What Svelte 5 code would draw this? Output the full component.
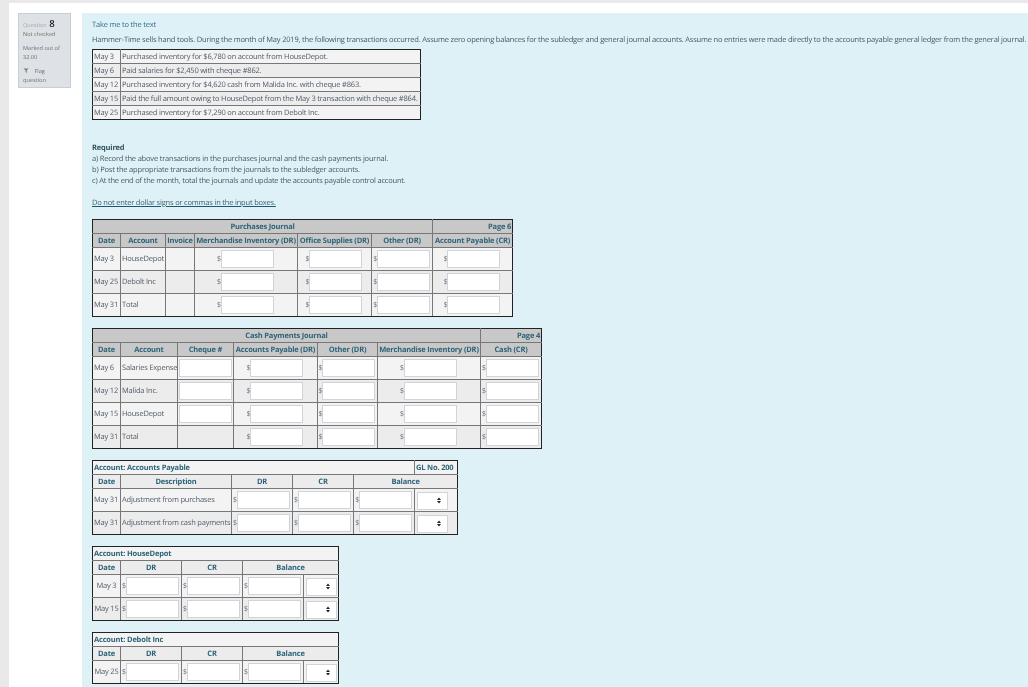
<script>
  const transactions = [
    ['May 3', 'Purchased inventory for $6,780 on account from HouseDepot.'],
    ['May 6', 'Paid salaries for $2,450 with cheque #862.'],
    ['May 12', 'Purchased inventory for $4,620 cash from Malida Inc. with cheque #863.'],
    ['May 15', 'Paid the full amount owing to HouseDepot from the May 3 transaction with cheque #864.'],
    ['May 25', 'Purchased inventory for $7,290 on account from Debolt Inc.']
  ];
  const purchases = [['May 3', 'HouseDepot'], ['May 25', 'Debolt Inc'], ['May 31', 'Total']];
  const payments = [
    ['May 6', 'Salaries Expense', true],
    ['May 12', 'Malida Inc.', true],
    ['May 15', 'HouseDepot', true],
    ['May 31', 'Total', false]
  ];
  const control = [['May 31', 'Adjustment from purchases'], ['May 31', 'Adjustment from cash payments']];
  const subledgers = [
    { name: 'HouseDepot', rows: ['May 3', 'May 15'] },
    { name: 'Debolt Inc', rows: ['May 25'] }
  ];
</script>

{#snippet money()}
  <span class="cur">$</span><input class="box" type="text" />
{/snippet}

{#snippet drcr()}
  <span class="dc"><svg viewBox="0 0 4 7" width="4" height="7"><path d="M2 .5 4 3H0zM2 6.5 0 4h4z" fill="#222" /></svg></span>
{/snippet}

<div class="card">
  <aside class="info">
    <div class="qno"><span>Question</span> <b>8</b></div>
    <div class="state">Not checked</div>
    <div class="grade">Marked out of<br />32.00</div>
    <div class="flag">
      <svg viewBox="0 0 8 8" width="6" height="6"><path d="M.5.8h7L5 3v1.2L4.3 7.6 3.4 4.2V3z" fill="#777" /></svg>
      <span class="f1">Flag</span><br />question
    </div>
  </aside>

  <main class="content">
    <p class="skip">Take me to the text</p>
    <p class="intro">Hammer-Time sells hand tools. During the month of May 2019, the following transactions occurred. Assume zero opening balances for the subledger and general journal accounts. Assume no entries were made directly to the accounts payable general ledger from the general journal.</p>

    <table class="t trans">
      <colgroup><col /><col /></colgroup>
      <tbody>
        {#each transactions as [d, text]}
          <tr><td>{d}</td><td>{text}</td></tr>
        {/each}
      </tbody>
    </table>

    <div class="req">
      <strong>Required</strong>
      <div>a) Record the above transactions in the purchases journal and the cash payments journal.</div>
      <div>b) Post the appropriate transactions from the journals to the subledger accounts.</div>
      <div>c) At the end of the month, total the journals and update the accounts payable control account.</div>
    </div>
    <p class="note"><u>Do not enter dollar signs or commas in the input boxes.</u></p>

    <table class="t journal purchases">
      <colgroup><col /><col /><col /><col /><col /><col /><col /></colgroup>
      <thead>
        <tr class="title"><th colspan="6">Purchases Journal</th><th class="right">Page 6</th></tr>
        <tr class="head"><th>Date</th><th>Account</th><th>Invoice</th><th>Merchandise Inventory (DR)</th><th>Office Supplies (DR)</th><th>Other (DR)</th><th>Account Payable (CR)</th></tr>
      </thead>
      <tbody>
        {#each purchases as [d, acc]}
          <tr class="row">
            <td>{d}</td><td>{acc}</td><td></td>
            <td class="c">{@render money()}</td><td class="c">{@render money()}</td><td class="c">{@render money()}</td><td class="c">{@render money()}</td>
          </tr>
        {/each}
      </tbody>
    </table>

    <table class="t journal payments">
      <colgroup><col /><col /><col /><col /><col /><col /><col /></colgroup>
      <thead>
        <tr class="title"><th colspan="6">Cash Payments Journal</th><th class="right">Page 4</th></tr>
        <tr class="head"><th>Date</th><th>Account</th><th>Cheque #</th><th>Accounts Payable (DR)</th><th>Other (DR)</th><th>Merchandise Inventory (DR)</th><th>Cash (CR)</th></tr>
      </thead>
      <tbody>
        {#each payments as [d, acc, cheque]}
          <tr class="row">
            <td>{d}</td><td>{acc}</td>
            <td class="c">{#if cheque}<input class="box" type="text" />{/if}</td>
            <td class="c">{@render money()}</td><td class="c">{@render money()}</td><td class="c">{@render money()}</td><td class="c">{@render money()}</td>
          </tr>
        {/each}
      </tbody>
    </table>

    <table class="t ledger control">
      <colgroup><col /><col /><col /><col /><col /><col /></colgroup>
      <thead>
        <tr class="title"><th colspan="5" class="left">Account: Accounts Payable</th><th class="left">GL No. 200</th></tr>
        <tr class="head"><th>Date</th><th>Description</th><th>DR</th><th>CR</th><th colspan="2">Balance</th></tr>
      </thead>
      <tbody>
        {#each control as [d, desc]}
          <tr class="row">
            <td>{d}</td><td>{desc}</td>
            <td class="c">{@render money()}</td><td class="c">{@render money()}</td><td class="c">{@render money()}</td>
            <td class="sel">{@render drcr()}</td>
          </tr>
        {/each}
      </tbody>
    </table>

    {#each subledgers as acc}
      <table class="t ledger sub">
        <colgroup><col /><col /><col /><col /><col /></colgroup>
        <thead>
          <tr class="title"><th colspan="5" class="left">Account: {acc.name}</th></tr>
          <tr class="head"><th>Date</th><th>DR</th><th>CR</th><th colspan="2">Balance</th></tr>
        </thead>
        <tbody>
          {#each acc.rows as d}
            <tr class="row">
              <td class="c">{d}</td>
              <td class="c">{@render money()}</td><td class="c">{@render money()}</td><td class="c">{@render money()}</td>
              <td class="c">{@render drcr()}</td>
            </tr>
          {/each}
        </tbody>
      </table>
    {/each}
  </main>
</div>

<style>
  :global(html), :global(body) { margin: 0; height: 687px; overflow: hidden; background: #e9e9e9; }
  .card {
    display: flex; gap: 11px; height: 684px; margin: 3px 0 0 9px; padding: 10px 0 0 9px;
    box-sizing: border-box; background: #fff; overflow: hidden;
    font: 7.5px/10px "Open Sans", sans-serif; letter-spacing: -0.19px; color: #4f5a62;
    text-rendering: geometricPrecision; filter: blur(0.25px);
  }
  .info {
    flex: none; width: 53px; height: 75px; box-sizing: border-box; padding: 3px 4px;
    background: #dee2e6; border: 1px solid #c6ced6; font-size: 5.6px; letter-spacing: 0; line-height: 9px; color: #6b7075;
  }
  .qno { height: 13px; line-height: 13px; white-space: nowrap; }
  .qno span { color: #a3a9ae; }
  .qno b { font-size: 9.5px; color: #1d2125; font-weight: 600; margin-left: 1px; }
  .state { margin-bottom: 5px; color: #70705c; }
  .grade { margin-bottom: 5px; }
  .flag { line-height: 9px; }
  .flag svg { vertical-align: -1px; margin-right: 3px; }
  .f1 { margin-left: 1px; }
  .content {
    flex: 1; min-width: 0; box-sizing: border-box; padding: 6px 0 0 10px;
    background: #def1f7; overflow: hidden; white-space: nowrap; color: #465862;
  }
  p { margin: 0; }
  .skip { height: 15px; line-height: 12px; color: #2f6f87; }
  .intro { height: 15px; line-height: 12px; }
  .t { border-collapse: collapse; table-layout: fixed; color: #505b67; line-height: 9px; }
  .t td, .t th { border: 1px solid #777; padding: 0 1px; overflow: hidden; white-space: nowrap; box-sizing: border-box; }
  .t tr > :first-child { border-left-color: #222; }
  .t tr > :last-child { border-right-color: #222; }
  .t > :first-of-type:not(colgroup) > tr:first-child > *,
  .t thead tr:first-child > * { border-top-color: #222; }
  .t tbody tr:last-child > * { border-bottom-color: #222; }
  .t tr:nth-child(odd) td { background: #f3f3f3; }
  .t tr:nth-child(even) td { background: #ececec; }
  .trans { width: 329px; }
  .trans col:first-child { width: 28px; }
  .t.trans td { height: 14px; padding-top: 2px; }
  .t.trans tr:first-child td { border-top-color: #222; }
  .req { margin-top: 23px; line-height: 11px; }
  .req strong { font-weight: 700; color: #35505e; display: block; }
  .note { margin-top: 11px; height: 11px; line-height: 11px; color: #3e5d6b; }
  .note u { text-decoration-color: #17596f; }
  .t thead th { height: 14px; padding-top: 2px; font-weight: 700; color: #2e6379; text-align: center; }
  .journal thead th { background: #c8c8c8; }
  .t thead th.right { text-align: right; }
  .t thead th.left { text-align: left; }
  .row td { height: 23px; }
  .t td.c { text-align: center; }
  .box {
    display: inline-block; vertical-align: middle; width: 53px; height: 18px; box-sizing: border-box;
    margin: 0; padding: 0; background: #fff; border: 1px solid #ced4da; border-radius: 0;
  }
  .cur { margin-left: -1px; font-size: 7px; color: #6a7480; }
  .dc {
    display: inline-flex; align-items: center; justify-content: flex-end; vertical-align: middle;
    width: 31px; height: 18px; margin-top: 1px; box-sizing: border-box; padding-right: 6px;
    background: #fff; border: 1px solid #ced4da;
  }
  .purchases { margin-top: 10px; width: 420px; }
  .purchases col:nth-child(1) { width: 28px; }
  .purchases col:nth-child(2) { width: 45px; }
  .purchases col:nth-child(3) { width: 29px; }
  .purchases col:nth-child(4) { width: 103px; }
  .purchases col:nth-child(5) { width: 74px; }
  .purchases col:nth-child(6) { width: 61px; }
  .purchases col:nth-child(7) { width: 80px; }
  .payments { margin-top: 11px; width: 449px; }
  .payments col:nth-child(1) { width: 28px; }
  .payments col:nth-child(2) { width: 57px; }
  .payments col:nth-child(3) { width: 56px; }
  .payments col:nth-child(4) { width: 84px; }
  .payments col:nth-child(5) { width: 60px; }
  .payments col:nth-child(6) { width: 103px; }
  .payments col:nth-child(7) { width: 61px; }
  .ledger { margin-top: 11px; }
  .ledger thead .title th { background: #f3f3f3; }
  .ledger thead .head th { background: #ececec; }
  .control { width: 365px; }
  .control col:nth-child(1) { width: 28px; }
  .control col:nth-child(2) { width: 111px; }
  .control col:nth-child(3) { width: 61px; }
  .control col:nth-child(4) { width: 61px; }
  .control col:nth-child(5) { width: 61px; }
  .control col:nth-child(6) { width: 43px; }
  .t td.sel { padding-left: 2px; }
  .sub { width: 246px; }
  .sub col:nth-child(1) { width: 28px; }
  .sub col:nth-child(2) { width: 61px; }
  .sub col:nth-child(3) { width: 61px; }
  .sub col:nth-child(4) { width: 61px; }
  .sub col:nth-child(5) { width: 35px; }
</style>
